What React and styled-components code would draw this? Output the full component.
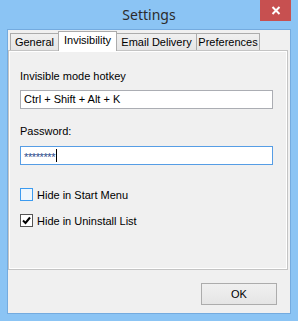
import React from 'react';
import styled, { createGlobalStyle } from 'styled-components';

const GlobalStyle = createGlobalStyle`
  html, body {
    margin: 0;
    padding: 0;
    background: #8bc4f4;
  }
  * {
    box-sizing: border-box;
  }
`;

const Window = styled.div`
  width: 298px;
  height: 321px;
  background: #8bc4f4;
  padding: 0 7px 7px 7px;
  display: flex;
  flex-direction: column;
  font-family: 'Liberation Sans', Arial, sans-serif;
  font-size: 11px;
  color: #000;
`;

const TitleBar = styled.div`
  height: 29px;
  display: flex;
  justify-content: center;
  position: relative;
`;

const Title = styled.div`
  font-family: 'Noto Sans', 'Open Sans', sans-serif;
  font-size: 14px;
  line-height: 20px;
  padding-top: 5px;
  color: #2b2b2b;
`;

const CloseButton = styled.div`
  position: absolute;
  top: 0;
  right: 0;
  width: 31px;
  height: 21px;
  background: #c75050;
  display: flex;
  align-items: center;
  justify-content: center;
`;

const Client = styled.div`
  flex: 1;
  border: 1px solid #74abdf;
  background: #f0f0f0;
  padding: 0 2px 0 0;
  display: flex;
  flex-direction: column;
`;

const TabRow = styled.div`
  display: flex;
  align-items: flex-end;
  height: 21px;
  padding: 1px 0 0 2px;
  margin-bottom: -1px;
  position: relative;
  z-index: 1;
`;

const Tab = styled.div`
  width: ${p => p.$w}px;
  height: ${p => (p.$active ? 20 : 17)}px;
  margin-bottom: ${p => (p.$active ? 0 : 1)}px;
  margin-left: ${p => (p.$first ? 0 : -1)}px;
  border: 1px solid #acacac;
  border-bottom: none;
  background: ${p => (p.$active ? '#ffffff' : 'linear-gradient(#f0f0f0, #e5e5e5)')};
  display: flex;
  align-items: ${p => (p.$active ? 'flex-start' : 'center')};
  padding-top: ${p => (p.$active ? 2 : 0)}px;
  justify-content: center;
  white-space: nowrap;
  position: relative;
  z-index: ${p => (p.$active ? 2 : 1)};
`;

const Panel = styled.div`
  height: 220px;
  border: 1px solid #c4c4c4;
  box-shadow: inset 1px 1px 0 #ffffff, inset -1px -1px 0 #ffffff;
  background: #f0f0f0;
  padding: 18px 14px 0 11px;
  display: flex;
  flex-direction: column;
`;

const Label = styled.div`
  line-height: 15px;
  margin-top: ${p => p.$mt || 0}px;
`;

const Field = styled.div`
  height: 19px;
  margin-top: ${p => p.$mt || 0}px;
  border: 1px solid ${p => (p.$focused ? '#569de5' : '#abadb3')};
  background: #fff;
  padding: 0 3px;
  display: flex;
  align-items: center;
  line-height: 15px;
`;

const Secret = styled.span`
  color: #2a4a8a;
  font-size: 11px;
  letter-spacing: -0.4px;
  padding-top: 3px;
`;

const Caret = styled.span`
  width: 1px;
  height: 13px;
  background: #000;
  margin-left: 1px;
`;

const CheckRow = styled.div`
  display: flex;
  align-items: center;
  gap: 4px;
  height: 15px;
  margin-top: ${p => p.$mt || 0}px;
`;

const Box = styled.div`
  width: 13px;
  height: 13px;
  border: 1px solid ${p => (p.$hover ? '#3c9bf0' : '#555555')};
  background: ${p => (p.$hover ? '#eef6fd' : '#ffffff')};
  display: flex;
  align-items: center;
  justify-content: center;
`;

const Footer = styled.div`
  flex: 1;
  display: flex;
  justify-content: flex-end;
  padding: 13px 11px 0 0;
`;

const Button = styled.div`
  width: 76px;
  height: 22px;
  border: 1px solid #acacac;
  background: linear-gradient(#f0f0f0, #e5e5e5);
  display: flex;
  align-items: center;
  justify-content: center;
`;

const tabs = [
  { label: 'General', w: 49 },
  { label: 'Invisibility', w: 59, active: true },
  { label: 'Email Delivery', w: 81 },
  { label: 'Preferences', w: 64 },
];

export default function App() {
  return (
    <>
      <GlobalStyle />
      <Window>
        <TitleBar>
          <Title>Settings</Title>
          <CloseButton>
            <svg width="10" height="9" viewBox="0 0 10 9">
              <path d="M1.5 1 L8.5 8 M8.5 1 L1.5 8" stroke="#fff" strokeWidth="2" />
            </svg>
          </CloseButton>
        </TitleBar>
        <Client>
          <TabRow>
            {tabs.map((t, i) => (
              <Tab key={t.label} $w={t.w} $active={t.active} $first={i === 0}>
                {t.label}
              </Tab>
            ))}
          </TabRow>
          <Panel>
            <Label>Invisible mode hotkey</Label>
            <Field $mt={6}>Ctrl + Shift + Alt + K</Field>
            <Label $mt={15}>Password:</Label>
            <Field $mt={7} $focused>
              <Secret>********</Secret>
              <Caret />
            </Field>
            <CheckRow $mt={22}>
              <Box $hover />
              <span>Hide in Start Menu</span>
            </CheckRow>
            <CheckRow $mt={11}>
              <Box>
                <svg width="9" height="9" viewBox="0 0 9 9">
                  <path d="M1 4.5 L3.5 7 L8 1.5" stroke="#000" strokeWidth="2" fill="none" />
                </svg>
              </Box>
              <span>Hide in Uninstall List</span>
            </CheckRow>
          </Panel>
          <Footer>
            <Button>OK</Button>
          </Footer>
        </Client>
      </Window>
    </>
  );
}
